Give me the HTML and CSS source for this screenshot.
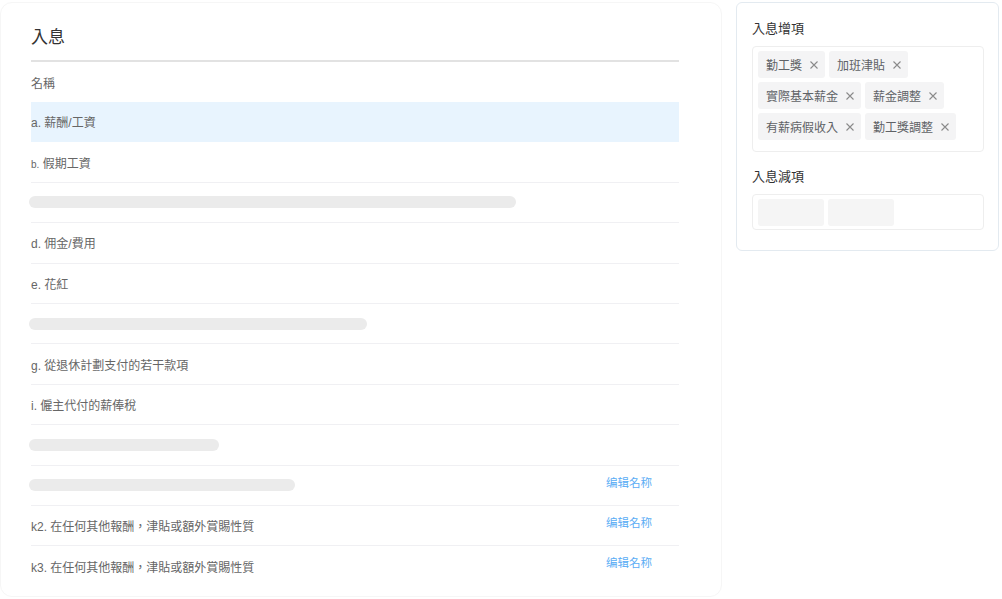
FILE: index.html
```html
<!DOCTYPE html>
<html lang="zh-Hant">
<head>
  <meta charset="UTF-8">
  <title>入息</title>
  <link rel="stylesheet" href="styles.css">
</head>
<body>
  <!-- 入息項目列表 -->
  <div class="panel">
    <div class="panel-title">入息</div>
    <div class="list-head">名稱</div>
    <div class="row active"><span class="name">a. 薪酬/工資</span></div>
    <div class="row"><span class="name"><small>b.</small> 假期工資</span></div>
    <div class="row"><span class="skeleton" style="width:487px"></span></div>
    <div class="row"><span class="name">d. 佣金/費用</span></div>
    <div class="row"><span class="name">e. 花紅</span></div>
    <div class="row"><span class="skeleton" style="width:338px"></span></div>
    <div class="row"><span class="name">g. 從退休計劃支付的若干款項</span></div>
    <div class="row"><span class="name">i. 僱主代付的薪俸稅</span></div>
    <div class="row"><span class="skeleton" style="width:190px"></span></div>
    <div class="row"><span class="skeleton" style="width:266px"></span><a class="edit">编辑名称</a></div>
    <div class="row"><span class="name">k2. 在任何其他報酬，津貼或額外賞賜性質</span><a class="edit">编辑名称</a></div>
    <div class="row last"><span class="name">k3. 在任何其他報酬，津貼或額外賞賜性質</span><a class="edit">编辑名称</a></div>
  </div>

  <!-- 增減項 -->
  <div class="side">
    <div class="side-title">入息增項</div>
    <div class="tag-box">
      <span class="tag">勤工獎<svg class="close" viewBox="0 0 8 8"><path d="M0.5 0.5L7.5 7.5M7.5 0.5L0.5 7.5"/></svg></span>
      <span class="tag">加班津貼<svg class="close" viewBox="0 0 8 8"><path d="M0.5 0.5L7.5 7.5M7.5 0.5L0.5 7.5"/></svg></span>
      <span class="tag">實際基本薪金<svg class="close" viewBox="0 0 8 8"><path d="M0.5 0.5L7.5 7.5M7.5 0.5L0.5 7.5"/></svg></span>
      <span class="tag">薪金調整<svg class="close" viewBox="0 0 8 8"><path d="M0.5 0.5L7.5 7.5M7.5 0.5L0.5 7.5"/></svg></span>
      <span class="tag">有薪病假收入<svg class="close" viewBox="0 0 8 8"><path d="M0.5 0.5L7.5 7.5M7.5 0.5L0.5 7.5"/></svg></span>
      <span class="tag">勤工獎調整<svg class="close" viewBox="0 0 8 8"><path d="M0.5 0.5L7.5 7.5M7.5 0.5L0.5 7.5"/></svg></span>
    </div>
    <div class="side-title">入息減項</div>
    <div class="tag-box empty">
      <span class="tag blank"></span>
      <span class="tag blank"></span>
    </div>
  </div>
</body>
</html>
```

FILE: styles.css
```css
body {
  margin: 0;
  padding: 2px 0 0 0;
  display: flex;
  align-items: flex-start;
  gap: 14px;
  font-family: "Liberation Sans", "Noto Sans CJK TC", sans-serif;
  color: #666;
  background: #fff;
}
.panel {
  width: 722px;
  height: 595px;
  box-sizing: border-box;
  padding: 0 42px 0 30px;
  border: 1px solid #f6f6f6;
  border-radius: 12px;
  overflow: hidden;
}
.panel-title {
  font-size: 17px;
  line-height: 24px;
  color: #333;
  padding: 23px 0 10px;
  border-bottom: 2px solid #e2e2e2;
}
.list-head {
  height: 40px;
  display: flex;
  align-items: center;
  font-size: 12px;
}
.row {
  height: 40.4px;
  box-sizing: border-box;
  display: flex;
  align-items: center;
  justify-content: space-between;
  border-bottom: 1px solid #f0f0f3;
  font-size: 12px;
}
.row.active {
  background: #e8f4fe;
  border-bottom-color: #e8f4fe;
}
.row.last {
  border-bottom: none;
}
.name small {
  font-size: 10px;
}
.skeleton {
  display: block;
  height: 12px;
  margin-left: -2px;
  border-radius: 6px;
  background: #ebebeb;
}
.edit {
  align-self: flex-start;
  margin: 8px 27px 0 0;
  font-size: 11.5px;
  color: #5aadf5;
  cursor: pointer;
}
.side {
  width: 263px;
  box-sizing: border-box;
  padding: 16px 14px 20px 15px;
  border: 1px solid #e3eaf0;
  border-radius: 6px;
}
.side-title {
  font-size: 13px;
  line-height: 20px;
  color: #333;
  margin-bottom: 7px;
}
.tag-box {
  display: flex;
  flex-wrap: wrap;
  gap: 4px 4px;
  padding: 4px 5px 11px;
  border: 1px solid #eee;
  border-radius: 4px;
  margin-bottom: 15px;
}
.tag-box.empty {
  padding-bottom: 3px;
  margin-bottom: 0;
}
.tag {
  height: 27px;
  display: inline-flex;
  align-items: center;
  padding: 0 7px 0 8px;
  border-radius: 3px;
  background: #f4f4f5;
  font-size: 12px;
  color: #606266;
}
.close {
  width: 8px;
  height: 8px;
  margin-left: 8px;
  stroke: #8a8a8a;
  stroke-width: 1.1;
  fill: none;
}
.tag.blank {
  width: 66px;
  padding: 0;
  background: #f5f5f5;
}
```
